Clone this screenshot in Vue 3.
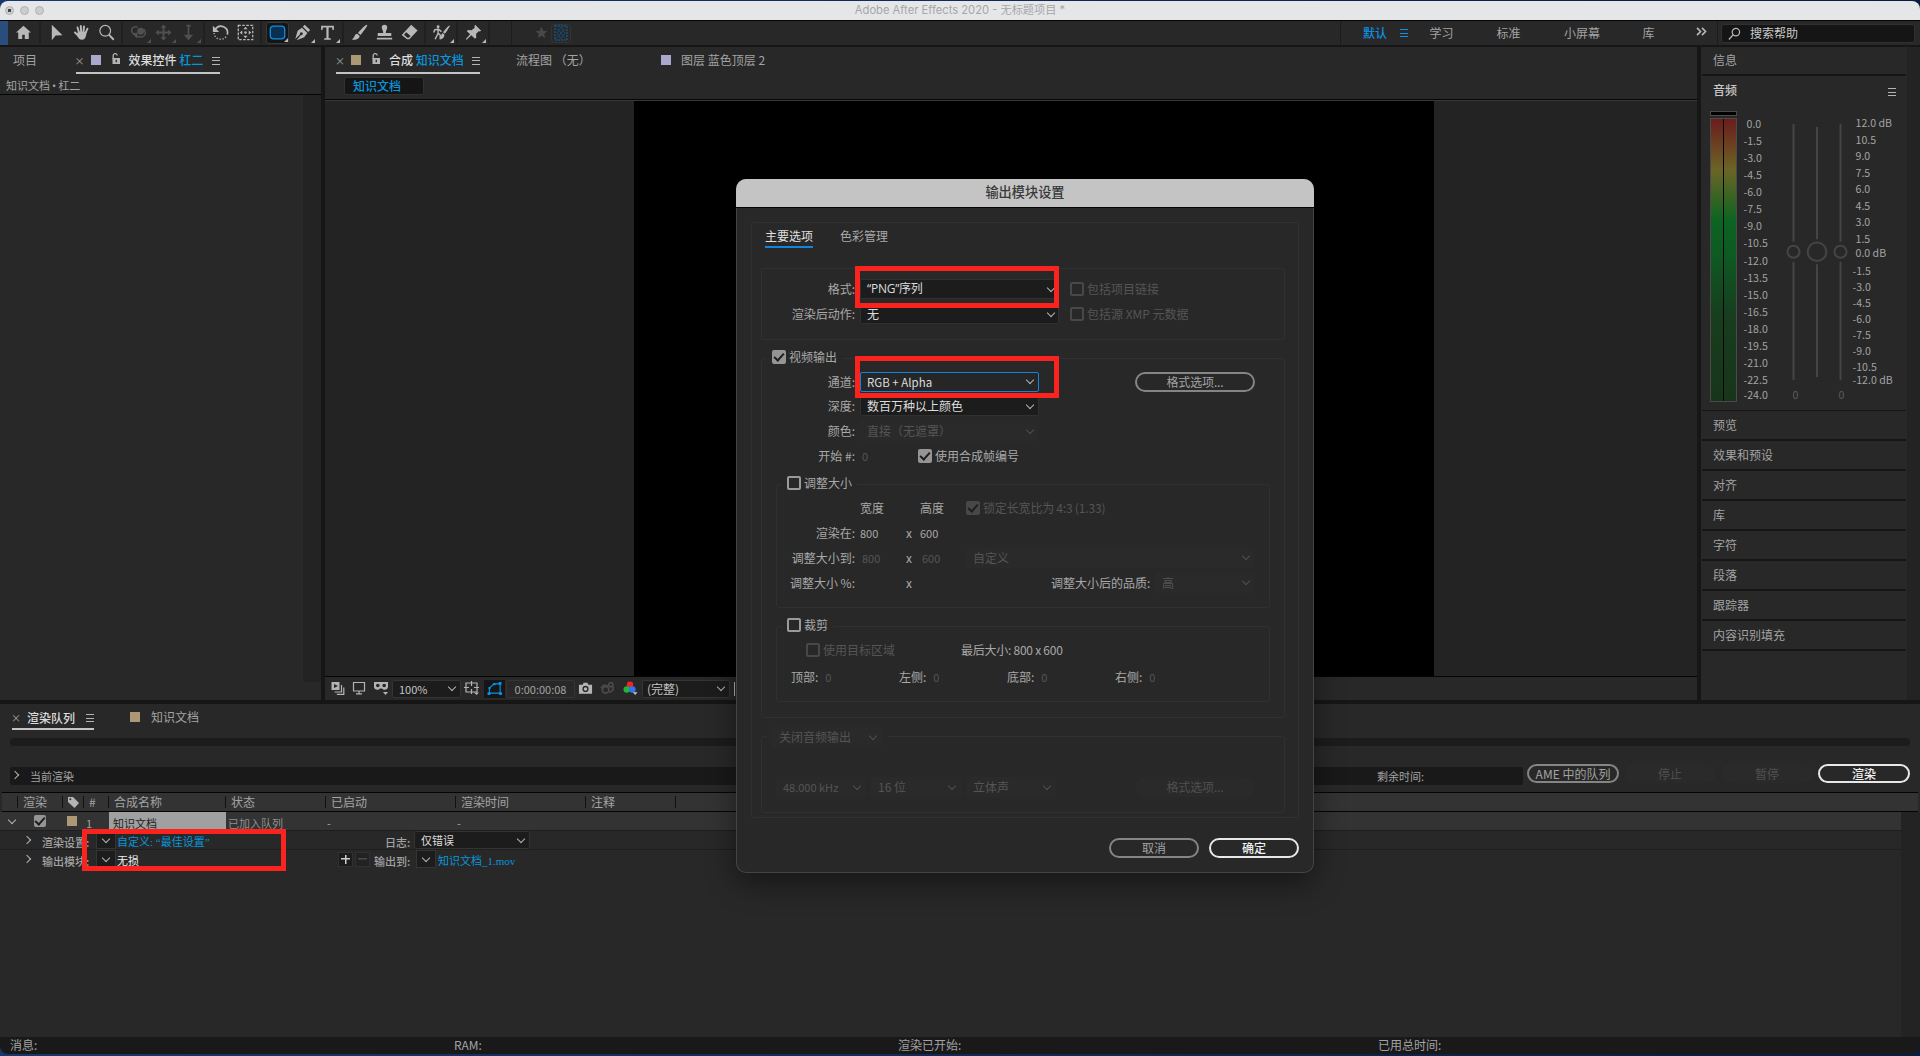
<script setup>
import { ref } from 'vue'

// ---- top toolbar, icons are drawn on a 20x20 grid
const toolGroups = [
	[
		{ id: 'home', svg: '<path fill="currentColor" d="M10 2 1.200 10h2.600v7.500h4.700v-5h3v5h4.700V10h2.600z"/>' }
	],
	[
		{ id: 'select', svg: '<path fill="currentColor" d="M4.500 1v18l4.500-5.500 8-.3z"/>' },
		{ id: 'hand', svg: '<path fill="none" stroke="currentColor" stroke-width="2.300" stroke-linecap="round" d="M7 10 5.300 4M9.600 9.500 9.200 2.300M12.200 9.500l.8-6.500M14.800 10.500l2.200-5M6.500 13.800 2.300 10"/><path fill="currentColor" d="M6 9h9.900c-.2 4-1 9.500-5.200 9.500-3 0-5-2.500-6.500-6z"/>' },
		{ id: 'zoom', svg: '<circle cx="8.500" cy="8" r="6.300" fill="none" stroke="currentColor" stroke-width="1.400"/><path d="m12.800 12.500 5.700 6" stroke="currentColor" stroke-width="2.300"/>' }
	],
	[
		{ id: 'orbit', dim: true, corner: true, svg: '<circle cx="12.500" cy="8.500" r="4" fill="currentColor"/><path fill="none" stroke="currentColor" stroke-width="1.800" d="M9 4C5 2 1 5 2 8.500c1.200 4.500 8 7.500 12.500 6.500 4-1 4.500-5 2-9"/><path fill="currentColor" d="m3 11 6-1-1 7z"/>' },
		{ id: 'pan', dim: true, corner: true, svg: '<path fill="none" stroke="currentColor" stroke-width="2.200" d="M10 3v14M3 10h14"/><path fill="currentColor" d="m10 .5 3.500 4h-7zM10 19.500l3.500-4h-7zM.5 10l4-3.500v7zM19.500 10l-4-3.500v7z"/>' },
		{ id: 'dolly', dim: true, corner: true, svg: '<path d="M10 2v12" stroke="currentColor" stroke-width="2"/><path fill="currentColor" d="m10 19 5.500-6.500h-11zM7.500 1h5v2h-5z"/>' }
	],
	[
		{ id: 'rotate', svg: '<path fill="none" stroke="currentColor" stroke-width="2" d="M4 6c5-7 16-2.500 14 6.500"/><path fill="none" stroke="currentColor" stroke-width="1.600" stroke-dasharray="1.500 2" d="M16.500 15C12 20.500 3 18 2.500 10.500"/><path fill="currentColor" d="M1 2v7.500h7.500z"/>' },
		{ id: 'anchor', svg: '<path fill="none" stroke="currentColor" stroke-width="1.500" stroke-dasharray="3 1.700" d="M1.500 1.500h17v17h-17z"/><path fill="currentColor" d="m10 3.200 2.500 3h-5zM10 16.800l2.500-3h-5zM3.200 10l3-2.500v5zM16.800 10l-3-2.500v5z"/><circle cx="10" cy="10" r="1.500" fill="currentColor"/>' }
	],
	[
		{ id: 'shape', active: true, corner: true, svg: '<rect x="1.500" y="2.500" width="17" height="15" rx="4" fill="#083053" stroke="#0b91e6" stroke-width="1.500"/>' },
		{ id: 'pen', corner: true, svg: '<path fill="currentColor" d="m12.500 1 6.500 6.200-2.400 2.200L10.400 3.200zM9.300 4.500 15.700 10.700 12 15.500 3 19l5.200-6a1.700 1.700 0 1 0-1.100-1L1.500 17.500 4.300 8z"/>' },
		{ id: 'type', corner: true, svg: '<path fill="currentColor" d="M2.500 2h15v5h-1.500l-.8-3h-3.900v12.500l2.700.5v1.500H6v-1.500l2.700-.5V4H4.800L4 7H2.500z"/>' }
	],
	[
		{ id: 'brush', svg: '<path fill="currentColor" d="M18.800.8c1 .7.500 1.500-7.500 12.200L8.200 10.500C14 3.500 18 .3 18.800.8zM7.300 11.500l3 2.700C9.500 18.500 4.500 19.500.8 18 5 16.500 3.500 12 7.300 11.500z"/>' },
		{ id: 'stamp', svg: '<path fill="currentColor" d="M6.800 4a3.200 3.200 0 0 1 6.400 0c0 2-1.700 3.500-1.700 6.500h6.500v3.700H2v-3.700h6.500c0-3-1.700-4.500-1.700-6.500zM1 16.300h18v2H1z"/>' },
		{ id: 'eraser', svg: '<path fill="currentColor" d="m12 1 7.500 6.500L9.800 18H7L.8 12.800zM3.500 12.700l4 3.600h1.700l2-2.300-5-4.300z" fill-rule="evenodd"/>' }
	],
	[
		{ id: 'roto', corner: true, svg: '<circle cx="6" cy="3.200" r="1.700" fill="currentColor"/><path fill="none" stroke="currentColor" stroke-width="1.700" d="M.8 10 2 7l4-1 1.500 1L10 9M6 6v5l-3.500 7M6 11l2.500 2v5"/><path fill="currentColor" d="M19.500 1.800c.7.500 0 1.500-5.500 9.700l-2.200-1.800c4-5 7.200-8.300 7.700-7.900zM11.300 10.700l2.200 1.900c-.5 4-2.800 5.200-5.500 5.400 2-1.500.8-5.300 3.300-7.300z"/>' }
	],
	[
		{ id: 'pin', corner: true, svg: '<path fill="currentColor" d="m12 1 7 6.800-1.600 1-1.400-.4-3 3.400.3 4-1.500 1.500-4.500-4.200L2 18.500 1 17.600l5-5.500-4-3.900L3.700 7l4 .3 3.800-3-.5-1.500z"/>' }
	]
]

const workspaces = [
	{ name: '学习', w: 67 },
	{ name: '标准', w: 67.5 },
	{ name: '小屏幕', w: 78.5 },
	{ name: '库', w: 53 }
]

// ---- audio panel
const meterLabels = ['0.0', '-1.5', '-3.0', '-4.5', '-6.0', '-7.5', '-9.0', '-10.5', '-12.0', '-13.5', '-15.0', '-16.5', '-18.0', '-19.5', '-21.0', '-22.5', '-24.0']
const gainUp = ['12.0 dB', '10.5', '9.0', '7.5', '6.0', '4.5', '3.0', '1.5']
const gainDown = ['-1.5', '-3.0', '-4.5', '-6.0', '-7.5', '-9.0', '-10.5']
const sliders = [
	{ x: 8.5, r: 6, top: 8, bottom: 264, gap: 10 },
	{ x: 32, r: 9.3, top: 11, bottom: 261, gap: 12.5 },
	{ x: 55.5, r: 6, top: 8, bottom: 264, gap: 10 }
]

const panels = ['预览', '效果和预设', '对齐', '库', '字符', '段落', '跟踪器', '内容识别填充']

// ---- render queue
const columns = [
	{ name: '', w: 16 },
	{ name: '渲染', w: 45 },
	{ name: 'tag', w: 21 },
	{ name: '#', w: 25 },
	{ name: '合成名称', w: 117 },
	{ name: '状态', w: 100 },
	{ name: '已启动', w: 130 },
	{ name: '渲染时间', w: 130 },
	{ name: '注释', w: 90 }
]

// ---- output module dialog
const videoOutput = ref(true)
const useCompFrame = ref(true)
const resize = ref(false)
const crop = ref(false)
const cropSides = ['顶部:', '左侧:', '底部:', '右侧:']
const audioOptions = ['48.000 kHz', '16 位', '立体声']
</script>

<template>
	<div class="window">
		<header class="titlebar">
			<div class="lights"><i class="dot"></i><i></i><i></i></div>
			<span>Adobe After Effects 2020 - 无标题项目 *</span>
		</header>

		<nav class="toolbar">
			<div class="desktop-edge"></div>
			<div v-for="(group, i) in toolGroups" :key="i" class="tool-group">
				<div v-for="t in group" :key="t.id" class="tool" :class="{ dim: t.dim, active: t.active }">
					<svg viewBox="0 0 20 20" v-html="t.svg"></svg>
					<b v-if="t.corner" class="corner"></b>
				</div>
			</div>
			<div class="tool-end"></div>
			<svg class="star" viewBox="0 0 20 20"><path fill="#484848" d="m10 1 2.600 6.200 6.700.5-5.200 4.300 1.700 6.500-5.800-3.500-5.800 3.500 1.700-6.500L.7 7.700l6.700-.5z" /></svg>
			<div class="checker"><svg viewBox="0 0 14 16"><rect x="1" y="1" width="12" height="14" fill="none" stroke="#15486c" stroke-width="2" stroke-dasharray="2 1" /><path d="M3 3l8 10M11 3 3 13M7 2 3 8l4 6 4-6z" stroke="#15486c" fill="none" /></svg></div>
			<div class="workspaces">
				<span class="current">默认</span>
				<i class="menu blue"></i>
				<span v-for="w in workspaces" :key="w.name" :style="{ width: w.w + 'px' }">{{ w.name }}</span>
				<svg class="more" viewBox="0 0 12 10"><path d="m1 1 4 4-4 4M6.500 1l4 4-4 4" fill="none" stroke="#b8b8b8" stroke-width="1.800" /></svg>
			</div>
			<div class="search">
				<svg viewBox="0 0 14 14"><circle cx="8.500" cy="5.500" r="4" fill="none" stroke="#b5b5b5" stroke-width="1.300" /><path d="m5.500 8.500-4.500 5" stroke="#b5b5b5" stroke-width="1.500" /></svg>
				搜索帮助
			</div>
		</nav>

		<main class="upper">
			<section class="effects">
				<div class="tabs">
					<span class="tab project">项目</span>
					<div class="tab open">
						<em>×</em><i class="swatch lilac"></i>
						<svg class="lock" viewBox="0 0 8 12"><path d="M1.200 6V2.800a2 2 0 0 1 4-.3" fill="none" stroke="#b4b4b4" stroke-width="1.300" /><path d="M.5 5h7.500v6H.5zM3.600 6.800v2.500h1.300V6.800z" fill="#b4b4b4" fill-rule="evenodd" /></svg>
						<strong>效果控件 <span class="link">杠二</span></strong>
						<i class="menu"></i>
					</div>
				</div>
				<div class="path">知识文档<b>•</b>杠二</div>
				<div class="effects-body"><div class="scroll"></div></div>
			</section>

			<section class="comp">
				<div class="tabs">
					<div class="tab open">
						<em>×</em><i class="swatch tan"></i>
						<svg class="lock" viewBox="0 0 8 12"><path d="M1.200 6V2.800a2 2 0 0 1 4-.3" fill="none" stroke="#b4b4b4" stroke-width="1.300" /><path d="M.5 5h7.500v6H.5zM3.600 6.800v2.500h1.300V6.800z" fill="#b4b4b4" fill-rule="evenodd" /></svg>
						<strong>合成 <span class="link">知识文档</span></strong>
						<i class="menu"></i>
					</div>
					<span class="tab flow">流程图 （无）</span>
					<i class="swatch lilac"></i>
					<span class="tab layer">图层 蓝色顶层 2</span>
				</div>
				<div class="crumbs"><span>知识文档</span></div>
				<div class="viewer"><div class="canvas"></div></div>
				<div class="viewer-bar">
					<svg class="vi a" viewBox="0 0 14 14"><path d="M1 1h8v8H1z" fill="#b4b4b4" /><path d="m3.500 3 4 2-4 2z" fill="#262626" /><path d="M11 4v7H4M13.300 6.500v6.800h-7" fill="none" stroke="#b4b4b4" stroke-width="1.200" /></svg>
					<svg class="vi b" viewBox="0 0 14 14"><path d="M1.500 1.500h11v8.500h-11zM4 12.800h6M7 10v3" fill="none" stroke="#b4b4b4" stroke-width="1.200" /></svg>
					<svg class="vi c" viewBox="0 0 16 14"><path d="M1 1h14v5c0 2.500-4 4-6 1.500H7C5 10 1 8.500 1 6z" fill="#b4b4b4" /><circle cx="4.800" cy="4.500" r="1.800" fill="#262626" /><circle cx="11.200" cy="4.500" r="1.800" fill="#262626" /><path d="M10 11h5l-2.500 3z" fill="#b4b4b4" /></svg>
					<div class="vsel zoom">100%<i class="chev"></i></div>
					<svg class="vi d" viewBox="0 0 16 14"><path d="M2 2h11v9H2zM7.500 0v5M7.500 8v5M0 6.500h5M10 6.500h5" fill="none" stroke="#b4b4b4" stroke-width="1.200" /><path d="M10 11.500h5L12.500 14z" fill="#b4b4b4" /></svg>
					<div class="maskbtn"><svg viewBox="0 0 16 14"><path d="M2 12V6.500L7 2h6.500v10z" fill="none" stroke="#0b91e6" stroke-width="1.200" /><path d="M0 11h3v3H0zM12.500 11h3v3h-3zM12 0h3v3h-3zM6 1h2.500v2.500H6zM1 5.500h2.200v2.200H1z" fill="#0b91e6" /></svg></div>
					<div class="time">0:00:00:08</div>
					<svg class="vi e" viewBox="0 0 16 13"><path d="M1 3h4l1-2h4l1 2h4v9.500H1z" fill="#b4b4b4" /><circle cx="8" cy="7.500" r="2.600" fill="none" stroke="#262626" stroke-width="1.400" /></svg>
					<svg class="vi f" viewBox="0 0 16 14"><g fill="none" stroke="#4a4a4a" stroke-width="1.800"><circle cx="6" cy="9" r="3.500" /><circle cx="11.500" cy="3.500" r="2.200" /><path d="m1 7 3-3 5 1M14 5v4l-4 3" /></g></svg>
					<svg class="vi g" viewBox="0 0 16 15"><circle cx="7.500" cy="4" r="3.500" fill="#f02323" /><circle cx="4" cy="9" r="3.500" fill="#1fb53a" /><circle cx="10" cy="9" r="3.500" fill="#3173f5" /><path d="M10.500 12h5L13 15z" fill="#c4c4c4" /></svg>
					<div class="vsel res">(完整)<i class="chev"></i></div>
					<div class="next"></div>
				</div>
			</section>

			<aside class="side">
				<div class="side-head info">信息</div>
				<div class="side-head audio-head">音频<i class="menu"></i></div>
				<div class="audio">
					<div class="meter">
						<div class="peak"></div>
						<div class="bars"><div></div></div>
					</div>
					<div class="scale left">
						<span v-for="l in meterLabels" :key="l">{{ l }}</span>
					</div>
					<svg class="sliders" width="66" height="290" viewBox="0 0 66 290">
						<g v-for="s in sliders" :key="s.x" stroke="#454545" stroke-width="2" fill="none">
							<path :d="`M${s.x} ${s.top}V${135.7 - s.gap}M${s.x} ${135.7 + s.gap}V${s.bottom}`" />
							<circle :cx="s.x" cy="135.700" :r="s.r" />
						</g>
						<text x="7.500" y="283">0</text>
						<text x="53.500" y="283">0</text>
					</svg>
					<div class="scale right">
						<span v-for="l in gainUp" :key="l">{{ l }}</span>
						<span class="zero">0.0 dB</span>
						<span v-for="l in gainDown" :key="l" class="down">{{ l }}</span>
						<span class="down last">-12.0 dB</span>
					</div>
				</div>
				<div v-for="p in panels" :key="p" class="side-item">{{ p }}</div>
			</aside>
			<div class="side-scroll"></div>
		</main>

		<section class="queue">
			<div class="tabs">
				<div class="tab open"><em>×</em><strong>渲染队列</strong><i class="menu"></i></div>
				<i class="swatch tan"></i>
				<span class="tab">知识文档</span>
			</div>
			<div class="progress"></div>
			<div class="controls">
				<div class="now"><i class="chev right"></i><span>当前渲染</span><span class="remain">剩余时间:</span></div>
				<button class="pill">AME 中的队列</button>
				<button class="pill off">停止</button>
				<button class="pill off">暂停</button>
				<button class="pill main">渲染</button>
			</div>
			<div class="thead">
				<div v-for="c in columns" :key="c.name" class="th" :style="{ width: c.w + 'px' }">
					<svg v-if="c.name === 'tag'" viewBox="0 0 12 12"><path d="M1 1h5l6 6-4.500 5L1 6z" fill="#b4b4b4" /><circle cx="3.300" cy="3.300" r="1" fill="#333" /></svg>
					<template v-else>{{ c.name }}</template>
				</div>
			</div>
			<div class="tbody">
				<div class="rows">
					<div class="item">
						<i class="chev"></i>
						<i class="check on small"></i>
						<i class="swatch tan"></i>
						<span class="num">1</span>
						<span class="name">知识文档</span>
						<span class="status">已加入队列</span>
						<span class="dash">-</span><span class="dash">-</span>
					</div>
					<div class="sub">
						<i class="chev right"></i>
						<span class="key">渲染设置:</span>
						<div class="drop"><i class="chev"></i></div>
						<span class="val blue">自定义: “最佳设置”</span>
						<span class="log">日志:</span>
						<div class="vsel logsel">仅错误<i class="chev"></i></div>
					</div>
					<div class="sub">
						<i class="chev right"></i>
						<span class="key">输出模块:</span>
						<div class="drop"><i class="chev"></i></div>
						<span class="val white">无损</span>
						<div class="pm"><b></b><b class="minus"></b></div>
						<span class="log out">输出到:</span>
						<div class="drop"><i class="chev"></i></div>
						<span class="val blue file">知识文档_1.mov</span>
					</div>
				</div>
				<div class="queue-scroll"></div>
			</div>
		</section>
		<footer class="status-bar">
			<span>消息:</span><span>RAM:</span><span>渲染已开始:</span><span>已用总时间:</span>
		</footer>
		<div class="mark m3"></div>

		<div class="dialog">
			<div class="dialog-title">输出模块设置</div>
			<div class="sheet">
				<div class="dtabs"><span class="on">主要选项</span><span>色彩管理</span></div>

				<div class="box format">
					<div class="row">
						<label>格式:</label>
						<div class="sel w199 quoted">“PNG”序列<i class="chev"></i></div>
						<i class="check off"></i><span class="faint">包括项目链接</span>
					</div>
					<div class="row">
						<label>渲染后动作:</label>
						<div class="sel w199">无<i class="chev"></i></div>
						<i class="check off"></i><span class="faint">包括源 XMP 元数据</span>
					</div>
				</div>

				<div class="box video">
					<div class="legend" @click="videoOutput = !videoOutput"><i class="check" :class="{ on: videoOutput }"></i>视频输出</div>
					<div class="row">
						<label>通道:</label>
						<div class="sel w179 focus">RGB + Alpha<i class="chev"></i></div>
						<button class="pill fmt">格式选项...</button>
					</div>
					<div class="row">
						<label>深度:</label>
						<div class="sel w179">数百万种以上颜色<i class="chev"></i></div>
					</div>
					<div class="row">
						<label>颜色:</label>
						<div class="sel w179 disabled">直接（无遮罩）<i class="chev"></i></div>
					</div>
					<div class="row">
						<label>开始 #:</label>
						<span class="faint start n">0</span>
						<i class="check" :class="{ on: useCompFrame }" @click="useCompFrame = !useCompFrame"></i><span>使用合成帧编号</span>
					</div>

					<div class="box inner resize">
						<div class="legend" @click="resize = !resize"><i class="check" :class="{ on: resize }"></i>调整大小</div>
						<div class="row">
							<label></label>
							<span class="cw">宽度</span><span class="cx"></span><span class="ch">高度</span>
							<i class="check on off"></i><span class="faint ratio">锁定长宽比为 4:3 (1.33)</span>
						</div>
						<div class="row">
							<label>渲染在:</label>
							<span class="cw n">800</span><span class="cx">x</span><span class="ch n">600</span>
						</div>
						<div class="row">
							<label>调整大小到:</label>
							<span class="cw n faint shift">800</span><span class="cx">x</span><span class="ch n faint shift">600</span>
							<div class="sel disabled custom">自定义<i class="chev"></i></div>
						</div>
						<div class="row">
							<label>调整大小 %:</label>
							<span class="cw"></span><span class="cx">x</span>
							<span class="quality">调整大小后的品质:</span>
							<div class="sel disabled qsel">高<i class="chev"></i></div>
						</div>
					</div>

					<div class="box inner crop">
						<div class="legend" @click="crop = !crop"><i class="check" :class="{ on: crop }"></i>裁剪</div>
						<div class="row target">
							<i class="check off"></i><span class="faint">使用目标区域</span>
							<span class="final">最后大小: 800 x 600</span>
						</div>
						<div class="row sides">
							<div v-for="s in cropSides" :key="s">{{ s }}<span class="faint n">0</span></div>
						</div>
					</div>
				</div>

				<div class="box sound">
					<div class="legend"><div class="sel disabled">关闭音频输出<i class="chev"></i></div></div>
					<div class="sound-row">
						<div v-for="o in audioOptions" :key="o" class="sel disabled">{{ o }}<i class="chev"></i></div>
						<button class="pill off">格式选项...</button>
					</div>
				</div>
			</div>
			<div class="dialog-foot">
				<button class="pill">取消</button>
				<button class="pill main">确定</button>
			</div>
			<div class="mark m1"></div>
			<div class="mark m2"></div>
		</div>
	</div>
</template>

<style>
body {
	background: #0c2547;
	overflow: hidden;
}
</style>

<style scoped>
* {
	box-sizing: border-box;
}

.window {
	position: relative;
	width: 1920px;
	height: 1056px;
	padding: 1px 0 2px;
	display: flex;
	flex-direction: column;
	background: linear-gradient(90deg, #17386a, #071c40);
	font: 12px/18px "Noto Sans CJK SC", sans-serif;
	color: #a3a3a3;
	white-space: nowrap;
}

i,
em {
	font-style: normal;
}

svg {
	display: block;
	flex: none;
}

.titlebar {
	height: 20px;
	flex: none;
	border-bottom: 1px solid #050505;
	border-radius: 8px 8px 0 0;
	background: #e5e6e8;
	color: #a5a6a8;
	display: flex;
	align-items: center;
	font-family: Inter, "Noto Sans CJK SC", sans-serif;
	font-size: 11.2px;
}

.titlebar span {
	flex: 1;
	text-align: center;
	padding-right: 50px;
	margin-top: -1px;
}

.lights {
	width: 50px;
	display: flex;
	gap: 6px;
	padding-left: 5px;
}

.lights i {
	width: 9px;
	height: 9px;
	border: 1px solid #b0b0b0;
	border-radius: 50%;
	background: #cdcdce;
}

.lights .dot {
	background: radial-gradient(circle, #444 1.500px, #cdcdce 2px);
}

/* ---- toolbar */
.toolbar {
	height: 26px;
	flex: none;
	border-bottom: 2px solid #161616;
	background: #282828;
	display: flex;
	align-items: center;
}

.desktop-edge {
	width: 8px;
	height: 24px;
	background: #2a4d7e;
}

.tool-group {
	display: flex;
	align-items: center;
	height: 22px;
	border-right: 2px solid #202020;
	padding: 0 2.500px;
}

.tool-group:nth-child(2) {
	width: 33px;
	padding-left: 3px;
}

.tool {
	position: relative;
	width: 25px;
	height: 22px;
	flex: none;
	display: grid;
	place-items: center;
	color: #b8b8b8;
}

.tool svg {
	width: 17px;
	height: 17px;
	margin-top: -2px;
}

.tool.dim {
	color: #505050;
}

.tool.active {
	width: 23px;
	margin: 0 1px;
	background: #151515;
	border: 1px solid #383838;
	border-radius: 3px;
}

.tool.active svg {
	margin-top: -1px;
}

.corner {
	position: absolute;
	right: 0;
	bottom: 1px;
	border: solid transparent;
	border-width: 2px;
	border-right-color: currentColor;
	border-bottom-color: currentColor;
}

.tool-end {
	width: 22px;
	height: 24px;
	border-right: 1px solid #1c1c1c;
}

.star {
	width: 13px;
	margin-left: 23px;
	margin-top: -1px;
}

.checker {
	width: 20px;
	height: 19px;
	margin-left: 3px;
	border: 1px solid #333;
	border-radius: 3px;
	display: grid;
	place-items: center;
}

.checker svg {
	width: 14px;
	height: 16px;
}

.workspaces {
	margin-left: auto;
	width: 378px;
	height: 24px;
	border: solid #1c1c1c;
	border-width: 0 1px;
	padding-left: 22px;
	display: flex;
	align-items: center;
}

.workspaces .current {
	color: #0b91e6;
	width: 36.500px;
	font-weight: 500;
}

.workspaces .menu {
	margin-right: 22px;
}

.more {
	width: 11px;
	height: 9px;
	margin-top: -3px;
}

.search {
	width: 194px;
	height: 19px;
	margin: 0 5px 0 3px;
	border: 1px solid #303030;
	border-radius: 3px;
	background: #151515;
	color: #c8c8c8;
	display: flex;
	align-items: center;
	gap: 9px;
	padding-left: 6px;
}

.search svg {
	width: 13px;
	height: 13px;
}

.menu {
	width: 8px;
	height: 8px;
	flex: none;
	border: solid #b4b4b4;
	border-width: 1px 0;
	background: linear-gradient(#b4b4b4, #b4b4b4) 0 2.500px / 100% 1px no-repeat;
}

.menu.blue {
	border-color: #0b91e6;
	background-image: linear-gradient(#0b91e6, #0b91e6);
}

/* ---- panels */
.upper {
	height: 653px;
	flex: none;
	display: flex;
	background: #161616;
}

.effects {
	width: 321px;
	background: #282828;
	display: flex;
	flex-direction: column;
}

.tabs {
	height: 27px;
	flex: none;
	display: flex;
	align-items: flex-start;
}

.tab {
	height: 27px;
	padding-top: 4px;
}

.tab.open {
	display: flex;
	align-items: center;
	padding: 0;
	border-bottom: 2px solid #c4c4c4;
}

.tab em {
	width: 15px;
	margin-left: -2px;
	padding: 2px 0 0 1px;
	font-size: 10px;
}

.tab .swatch {
	margin-left: 2px;
}

.tab strong {
	font-weight: 500;
	color: #dcdcdc;
}

.link {
	color: #0796dc;
}

.tab .menu {
	margin-left: auto;
	margin-top: 2px;
}

.swatch {
	width: 10px;
	height: 10px;
	flex: none;
}

.lilac {
	background: #aaa9cd;
}

.tan {
	background: #ad9876;
}

.lock {
	width: 8px;
	height: 12px;
	margin: -1px 9px 0 11px;
}

.project {
	width: 62.500px;
	margin-left: 13px;
}

.effects .open,
.comp .open {
	width: 144px;
}

.path {
	height: 21px;
	padding: 2px 0 0 6px;
	border-bottom: 1px solid #050505;
	font-size: 11px;
}

.path b {
	margin: 0 2px;
	font-family: "Open Sans", sans-serif;
	font-weight: 400;
}

.effects-body {
	flex: 1;
	display: flex;
	justify-content: flex-end;
}

.scroll {
	width: 18px;
	margin-bottom: 18px;
	background: #232323;
}

.comp {
	width: 1372px;
	margin: 0 4px;
	background: #282828;
	display: flex;
	flex-direction: column;
}

.comp .open {
	margin-left: 11px;
}

.flow {
	width: 181px;
	padding-left: 36px;
}

.comp .tabs>.swatch {
	margin-top: 8px;
}

.layer {
	margin-left: 10px;
}

.crumbs {
	height: 26px;
	padding: 3px 0 0 19px;
	border-bottom: 1px solid #050505;
}

.crumbs span {
	display: block;
	width: 80px;
	height: 18px;
	line-height: 15px;
	padding-left: 8px;
	border: 1px solid #303030;
	border-radius: 3px;
	background: #151515;
	color: #0796dc;
	font-weight: 500;
}

.viewer {
	height: 576px;
	border-top: 1px solid #383838;
	background: #232323;
}

.canvas {
	width: 800px;
	height: 100%;
	margin-left: 309px;
	background: #000;
}

.viewer-bar {
	height: 24px;
	border-top: 1px solid #050505;
	display: flex;
	align-items: center;
	font-size: 11px;
}

.vi {
	width: 15px;
	height: 14px;
	margin-top: -2px;
}

.vi.a {
	margin-left: 5px;
}

.vi.b {
	margin-left: 7px;
	width: 14px;
}

.vi.c {
	width: 16px;
	margin-left: 7px;
	margin-right: 3px;
}

.vi.d {
	margin-left: 3px;
	margin-right: 4px;
	width: 16px;
}

.vi.e {
	margin-left: 3px;
	margin-right: 7px;
}

.vi.g {
	margin-left: 8px;
	margin-right: 4px;
}

.vsel {
	height: 18px;
	border: 1px solid #343434;
	border-radius: 2px;
	background: #1c1c1c;
	color: #c4c4c4;
	display: flex;
	align-items: center;
	padding: 0 5px 0 6px;
}

.vsel .chev,
.sel .chev {
	margin-left: auto;
}

.vsel.zoom {
	width: 69px;
}

.vsel.res {
	width: 88px;
	padding-left: 4px;
	font-size: 12px;
}

.next {
	width: 1px;
	height: 14px;
	margin-left: 4px;
	background: #b4b4b4;
}

.maskbtn {
	width: 21px;
	height: 18px;
	background: #161616;
	display: grid;
	place-items: center;
}

.maskbtn svg {
	width: 16px;
	height: 13px;
}

.time {
	width: 69px;
	height: 18px;
	line-height: 16px;
	border: 1px solid #343434;
	border-radius: 2px;
	margin-left: 1px;
	text-align: center;
}

.chev {
	width: 6px;
	height: 6px;
	flex: none;
	margin: -3px 0 0;
	border: solid #b4b4b4;
	border-width: 0 1.300px 1.300px 0;
	transform: rotate(45deg);
}

.chev.right {
	transform: rotate(-45deg);
	margin-top: 0;
}

/* ---- right column */
.side {
	width: 206px;
	padding: 0 1px;
	background: #282828;
}

.side-scroll {
	flex: 1;
	background: #232323;
}

.side-head {
	height: 29px;
	padding: 4px 0 0 11px;
	border-bottom: 2px solid #161616;
}

.audio-head {
	height: 33px;
	border: 0;
	color: #c8c8c8;
	font-weight: 500;
	padding: 5px 10px 0 11px;
	display: flex;
	justify-content: space-between;
	align-items: flex-start;
}

.audio-head .menu {
	margin-top: 7px;
}

.audio {
	height: 302px;
	border-bottom: 1px solid #161616;
	padding: 2px 0 0 8px;
	display: flex;
	font-size: 10.600px;
}

.meter {
	width: 27px;
}

.peak {
	height: 5px;
	margin-bottom: 2px;
	border: 1px solid #4a4a4a;
	background: #000;
}

.bars {
	height: 284px;
	border: 1px solid #4a4a4a;
	background: linear-gradient(#6b1c1c, #6b6426 18%, #0c6422 36%, #0e5a22 48%, #173d1e 70%, #18351c);
}

.bars div {
	width: 1px;
	height: 100%;
	margin-left: 12px;
	background: #050505;
}

.scale {
	display: flex;
	flex-direction: column;
}

.scale span {
	height: 17.070px;
	flex: none;
}

.left {
	width: 41px;
	margin: 4px 0 0 6.500px;
}

.left span:first-child {
	padding-left: 3px;
}

.left span:last-child {
	margin-top: -2px;
}

.sliders {
	margin-top: 5px;
}

.sliders text {
	fill: #5c5c5c;
	font-size: 10.600px;
}

.right {
	margin: 3px 0 0 5px;
}

.right span {
	height: 16.500px;
}

.right .zero {
	margin: -2px 0 1.500px;
}

.right .down {
	height: 16px;
	margin-left: -3px;
}

.right .last {
	margin-top: -3px;
}

.side-item {
	height: 30px;
	padding: 5px 0 0 11px;
	border-bottom: 2px solid #161616;
}

/* ---- render queue */
.queue {
	flex: 1;
	min-height: 0;
	border-top: 4px solid #161616;
	background: #282828;
	display: flex;
	flex-direction: column;
}

.queue .tabs {
	height: 26px;
}

.queue .tab {
	height: 26px;
}

.queue .open {
	width: 82px;
	margin: 0 36px 0 12px;
	padding-top: 3px;
}

.queue .open em {
	width: 17px;
	padding-top: 0;
}

.queue .open .menu {
	margin-top: 1px;
}

.queue .tabs>.swatch {
	margin: 8px 11px 0 0;
}

.progress {
	height: 8px;
	flex: none;
	margin: 8px 10px 18px;
	border-radius: 4px;
	background: #1c1c1c;
}

.controls {
	height: 28px;
	flex: none;
	display: flex;
	padding-left: 10px;
}

.now {
	width: 1513px;
	height: 18px;
	line-height: 16px;
	margin: 3px 4px 0 0;
	border-radius: 2px;
	background: #191919;
	display: flex;
	align-items: center;
	font-size: 11px;
	padding-left: 2px;
}

.now span {
	margin-top: -1px;
}

.now .chev {
	margin: -2px 12px 0 0;
}

.now .remain {
	margin-left: 1303px;
}

.pill {
	height: 20px;
	line-height: 16px;
	padding: 0;
	border: 2px solid #858585;
	border-radius: 10px;
	background: transparent;
	color: #a3a3a3;
	font-family: inherit;
	font-size: 12px;
}

.pill.main {
	border-color: #e8e8e8;
	color: #f0f0f0;
	font-weight: 500;
}

.pill.off {
	border-color: transparent;
	background: #2a2a2a;
	background-clip: border-box;
	color: #505050;
}

.controls .pill {
	width: 92px;
	height: 19px;
	line-height: 15px;
	margin-right: 5px;
}

.thead {
	height: 20px;
	flex: none;
	margin: 0 2px;
	border: solid #050505;
	border-width: 1px 0;
	background: #333;
	display: flex;
	align-items: center;
}

.th {
	height: 12px;
	line-height: 12px;
	padding-left: 5px;
	border-right: 1px solid #111;
}

.th svg {
	width: 12px;
	height: 12px;
	margin-left: -1px;
}

.tbody {
	flex: 1;
	display: flex;
}

.rows {
	flex: 1;
}

.queue-scroll {
	width: 19px;
	background: #232323;
}

.item {
	height: 18px;
	background: #333;
	display: flex;
	align-items: center;
	font-size: 11px;
}

.item .chev {
	margin: -2px 19px 0 9px;
}

.item .swatch {
	margin: 0 9px 0 21px;
}

.num {
	width: 23px;
	padding-top: 3px;
}

.name {
	width: 117px;
	height: 18px;
	padding: 2px 0 0 4px;
	background: #a0a0a0;
	color: #222;
}

.status {
	width: 101px;
	padding: 4px 0 0 2px;
	color: #8f8f8f;
}

.dash {
	width: 130px;
	padding-top: 4px;
}

.sub {
	height: 19px;
	border-top: 1px solid #1e1e1e;
	display: flex;
	align-items: center;
	font-size: 11px;
}

.sub>.chev {
	margin: -1px 12px 0 24px;
}

.key {
	width: 54px;
	font-weight: 500;
	padding-top: 3px;
}

.drop {
	width: 20px;
	height: 18px;
	border: 1px solid #343434;
	background: #1c1c1c;
	display: grid;
	place-items: center;
}

.val {
	width: 269px;
	padding: 3px 0 0 1px;
	font-family: "Liberation Serif", "Noto Sans CJK SC", serif;
}

.val.blue {
	color: #0796dc;
}

.val.white {
	width: 222px;
	color: #f0f0f0;
}

.log {
	width: 29px;
	padding-top: 3px;
	font-weight: 500;
}

.log.out {
	width: 42px;
}

.val.file {
	width: auto;
	padding-left: 2px;
}

.logsel {
	width: 116px;
	color: #dcdcdc;
	padding-left: 6px;
}

.pm {
	width: 36px;
	display: flex;
	gap: 2px;
}

.pm b {
	width: 15px;
	height: 15px;
	border: 1px solid #303030;
	background: linear-gradient(#ccc, #ccc) center / 9px 1.500px no-repeat, linear-gradient(#ccc, #ccc) center / 1.500px 9px no-repeat, #1c1c1c;
}

.pm .minus {
	background: linear-gradient(#4a4a4a, #4a4a4a) center / 9px 1.500px no-repeat, #222;
}

.status-bar {
	height: 17px;
	flex: none;
	border-radius: 0 0 8px 8px;
	background: #191919;
	display: flex;
	padding-left: 10px;
	line-height: 15px;
}

.status-bar span {
	width: 444px;
}

.status-bar span:nth-child(3) {
	width: 480px;
}

/* ---- dialog */
.dialog {
	position: absolute;
	left: 736px;
	top: 179px;
	width: 578px;
	height: 694px;
	border-radius: 10px;
	background: #282828;
	box-shadow: inset 0 0 0 1px #444, 0 10px 30px rgba(0, 0, 0, .45);
	color: #a8a8a8;
}

.dialog-title {
	height: 29px;
	border-bottom: 1px solid #050505;
	border-radius: 10px 10px 0 0;
	background: #c4c4c4;
	color: #3a3a3a;
	text-align: center;
	font-size: 13.200px;
	font-weight: 500;
	line-height: 25px;
}

.sheet {
	height: 596px;
	margin: 14px 15px 0;
	border: 1px solid #303030;
	border-radius: 2px;
}

.dtabs {
	display: flex;
	gap: 27px;
	padding-left: 13px;
}

.dtabs span {
	height: 25px;
	padding-top: 4px;
	border-bottom: 2px solid transparent;
}

.dtabs .on {
	border-color: #0f85e0;
	color: #e0e0e0;
}

.box {
	margin: 0 13px 0 9px;
	border: 1px solid #303030;
	border-radius: 3px;
}

.row {
	height: 24.800px;
	display: flex;
	align-items: center;
}

.row label {
	width: 93px;
	margin-right: 5px;
	text-align: right;
}

.format {
	height: 72px;
	margin-top: 20px;
	padding-top: 8px;
}

.video {
	height: 360px;
	margin-top: 18px;
}

.inner {
	margin: 16px 14px 0;
}

.inner .row label {
	width: 78px;
}

.resize {
	height: 124px;
}

.crop {
	height: 76px;
	margin-top: 18px;
}

.sound {
	height: 77px;
	margin-top: 18px;
}

.legend {
	width: max-content;
	height: 16px;
	margin: -10px 0 4.300px 5px;
	padding: 0 5px;
	background: #282828;
	display: flex;
	align-items: center;
}

.legend .check {
	margin-left: 0;
}

.check {
	width: 14px;
	height: 14px;
	flex: none;
	margin-right: 3px;
	border: 2px solid #9a9a9a;
	border-radius: 2px;
	display: grid;
	place-items: center;
}

.check.on {
	background: #959595;
	border-color: #959595;
}

.check.on::after {
	content: "";
	width: 4px;
	height: 8px;
	margin-top: -2px;
	border: solid #1e1e1e;
	border-width: 0 2px 2px 0;
	transform: rotate(42deg);
}

.check.off {
	border-color: #484848;
}

.check.on.off {
	background: #484848;
}

.check.small {
	width: 12px;
	height: 12px;
	margin: 0;
}

.faint {
	color: #555;
}

.n {
	font-size: 11px;
}

.sel {
	height: 20px;
	border: 1px solid #303030;
	border-radius: 2px;
	background: #1c1c1c;
	color: #dcdcdc;
	display: flex;
	align-items: center;
	padding: 0 5px 0 6px;
}

/* half width quotes around the latin name */
.sel.quoted {
	font-family: "Open Sans", "Noto Sans CJK SC", sans-serif;
	letter-spacing: -.25px;
}

.sel.focus {
	border-color: #0f85e0;
	background: #262626;
	font-size: 11.500px;
}

.sel.disabled {
	border-color: #2a2a2a;
	background: #2a2a2a;
	color: #555;
}

.sel.disabled .chev {
	border-color: #505050;
}

.w199 {
	width: 199px;
	margin-right: 11px;
}

.w199 .chev {
	margin-right: -1px;
}

.w179 {
	width: 179px;
}

.fmt {
	width: 120px;
	margin-left: 96px;
	letter-spacing: -.15px;
}

.start {
	width: 58px;
	padding-left: 2px;
}

.cw {
	width: 46px;
}

.cx {
	width: 14px;
}

.ch {
	width: 46px;
}

.shift {
	padding-left: 2px;
}

.ratio {
	letter-spacing: -.15px;
	word-spacing: -.3px;
}

.custom {
	width: 289px;
}

.quality {
	margin-left: 131px;
	width: 104px;
}

.qsel {
	width: 100px;
}

.target {
	padding-left: 29px;
}

.final {
	margin-left: 66px;
	letter-spacing: -.25px;
}

.sides {
	height: 28px;
	padding-left: 14px;
}

.sides div {
	width: 108px;
}

.sides .faint {
	margin-left: 7px;
}

.sound .legend {
	height: 20px;
	margin-bottom: 30px;
}

.sound .legend .sel {
	width: 110px;
}

.sound-row {
	display: flex;
	gap: 5px;
	padding-left: 14px;
}

.sound-row .sel {
	width: 90px;
}

.sound-row .sel:first-child {
	font-size: 11px;
}

.sound-row .pill {
	width: 120px;
	margin-left: 74px;
	letter-spacing: -.15px;
}

.dialog-foot {
	display: flex;
	justify-content: flex-end;
	gap: 10px;
	padding: 20px 15px 0;
}

.dialog-foot .pill {
	width: 90px;
}

/* red highlight frames over the fields */
.mark {
	position: absolute;
	border: 5px solid #fb231e;
}

.m1 {
	left: 119px;
	top: 87px;
	width: 204px;
	height: 42px;
}

.m2 {
	left: 119px;
	top: 177px;
	width: 204px;
	height: 42px;
}

.m3 {
	left: 82px;
	top: 829px;
	width: 204px;
	height: 42px;
}
</style>
